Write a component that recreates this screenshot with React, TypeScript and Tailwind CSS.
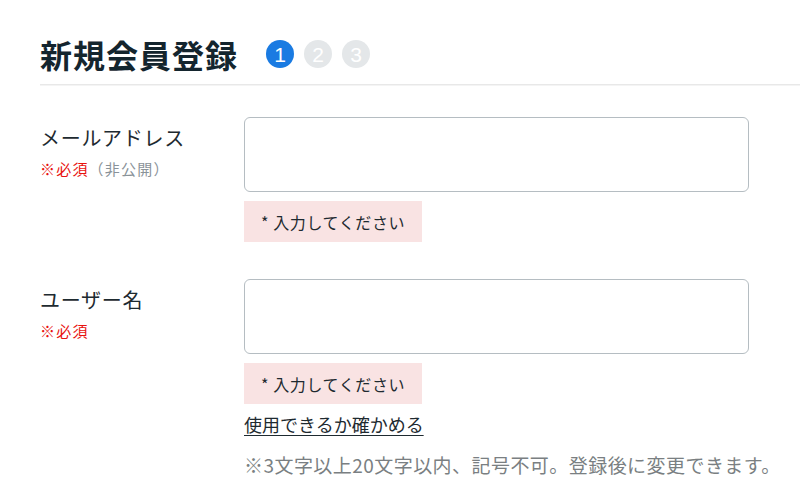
import React from 'react';

const FONT = { fontFamily: '"Noto Sans CJK JP", "Noto Sans", sans-serif' };

const Step: React.FC<{ n: number; active?: boolean }> = ({ n, active }) => (
  <span
    className={`flex h-[28px] w-[28px] items-center justify-center rounded-full text-[21px] font-normal leading-none text-white ${
      active ? 'bg-[#1a7be2]' : 'bg-[#e4e7e9]'
    }`}
    style={{ fontFamily: '"Liberation Sans", Arial, sans-serif' }}
  >
    {n}
  </span>
);

const ErrorNote: React.FC = () => (
  <div className="mt-[9px] inline-flex h-[41px] items-center bg-[#f9e3e3] px-[17px] text-[16px] tracking-[0.6px] text-[#1e2a30]">
    * 入力してください
  </div>
);

export default function App() {
  return (
    <div className="min-h-screen overflow-hidden bg-white pl-[40px] pt-[34px]" style={FONT}>
      {/* header */}
      <div className="flex h-[40px] items-center">
        <h1 className="text-[32px] font-bold leading-none tracking-[1px] text-[#14252e]">新規会員登録</h1>
        <div className="ml-[28px] flex gap-[10px]">
          <Step n={1} active />
          <Step n={2} />
          <Step n={3} />
        </div>
      </div>
      <div className="mt-[10px] border-t border-b border-t-[#e8e8e8] border-b-[#f4f4f4]" />

      {/* email */}
      <div className="mt-[31px] flex">
        <div className="w-[204px] pt-[6px]">
          <div className="text-[20px] leading-[30px] tracking-[0.7px] text-[#1e2a30]">メールアドレス</div>
          <div className="mt-[5px] text-[15px] leading-[22px] tracking-[1.2px]">
            <span className="text-[#e8130f]">※必須</span>
            <span className="text-[#8a9399]">（非公開）</span>
          </div>
        </div>
        <div className="flex flex-col items-start">
          <input
            type="email"
            className="h-[75px] w-[505px] rounded-[6px] border border-[#b5bdc2] bg-white px-3 outline-none"
          />
          <ErrorNote />
        </div>
      </div>

      {/* username */}
      <div className="mt-[37px] flex">
        <div className="w-[204px] pt-[6px]">
          <div className="text-[20px] leading-[30px] tracking-[0.7px] text-[#1e2a30]">ユーザー名</div>
          <div className="mt-[5px] text-[15px] leading-[22px] tracking-[1.2px] text-[#e8130f]">※必須</div>
        </div>
        <div className="flex flex-col items-start">
          <input
            type="text"
            className="h-[75px] w-[505px] rounded-[6px] border border-[#b5bdc2] bg-white px-3 outline-none"
          />
          <ErrorNote />
          <a href="#" className="mt-[7px] text-[18px] leading-[27px] text-[#1e2a30] underline underline-offset-[3px]">
            使用できるか確かめる
          </a>
          <p className="mt-[13px] whitespace-nowrap text-[19px] leading-[27px] tracking-[0.45px] text-[#7a7f82]">
            ※3文字以上20文字以内、記号不可。登録後に変更できます。
          </p>
        </div>
      </div>
    </div>
  );
}
